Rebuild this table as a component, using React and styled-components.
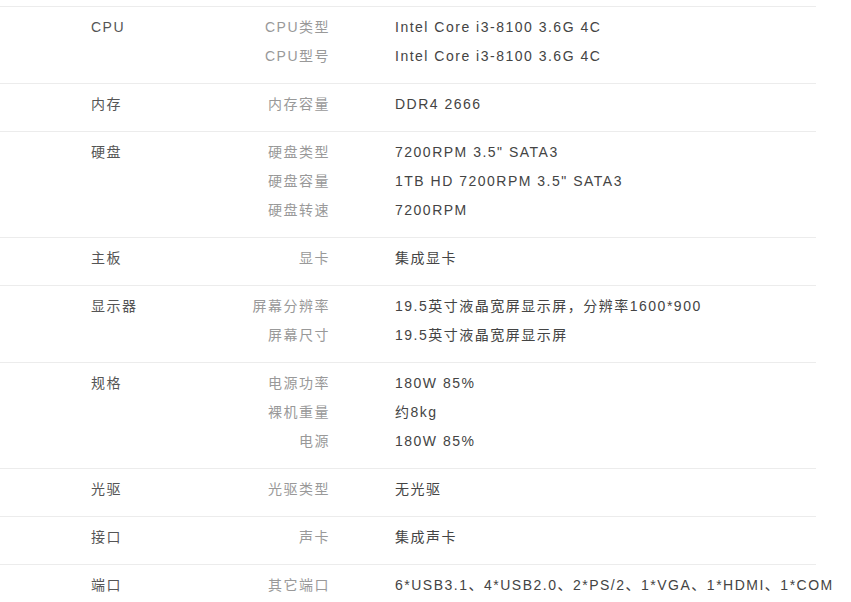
import React from 'react'
import styled, { createGlobalStyle } from 'styled-components'

const GlobalStyle = createGlobalStyle`
  body {
    margin: 0;
    background: #fff;
    font-family: "Liberation Sans", Arial, "Noto Sans CJK SC", sans-serif;
  }
`

const specs = [
  { name: 'CPU', items: [['CPU类型', 'Intel Core i3-8100 3.6G 4C'], ['CPU型号', 'Intel Core i3-8100 3.6G 4C']] },
  { name: '内存', items: [['内存容量', 'DDR4 2666']] },
  {
    name: '硬盘',
    items: [
      ['硬盘类型', '7200RPM 3.5" SATA3'],
      ['硬盘容量', '1TB HD 7200RPM 3.5" SATA3'],
      ['硬盘转速', '7200RPM'],
    ],
  },
  { name: '主板', items: [['显卡', '集成显卡']] },
  {
    name: '显示器',
    items: [
      ['屏幕分辨率', '19.5英寸液晶宽屏显示屏，分辨率1600*900'],
      ['屏幕尺寸', '19.5英寸液晶宽屏显示屏'],
    ],
  },
  {
    name: '规格',
    items: [
      ['电源功率', '180W 85%'],
      ['裸机重量', '约8kg'],
      ['电源', '180W 85%'],
    ],
  },
  { name: '光驱', items: [['光驱类型', '无光驱']] },
  { name: '接口', items: [['声卡', '集成声卡']] },
  { name: '端口', items: [['其它端口', '6*USB3.1、4*USB2.0、2*PS/2、1*VGA、1*HDMI、1*COM']] },
]

const App = () => {
  return (
    <>
      <GlobalStyle />
      <SpecTable>
        {specs.map(group => (
          <Group key={group.name}>
            <GroupName>{group.name}</GroupName>
            <Items>
              {group.items.map(([label, value]) => (
                <Item key={label}>
                  <Label>{label}</Label>
                  <Value>{value}</Value>
                </Item>
              ))}
            </Items>
          </Group>
        ))}
      </SpecTable>
    </>
  )
}

const SpecTable = styled.div`
  width: 816px;
  padding-top: 6px;
  font-size: 14px;
  letter-spacing: 1.5px;
`

const Group = styled.div`
  display: flex;
  align-items: flex-start;
  border-top: 1px solid #ececec;
  padding: 10px 0 8px;
`

const GroupName = styled.div`
  flex: 0 0 100px;
  padding-left: 91px;
  color: #555;
  line-height: 20px;
`

const Items = styled.div`
  flex: 1;
  display: flex;
  flex-direction: column;
`

const Item = styled.div`
  display: grid;
  grid-template-columns: 139px 1fr;
  column-gap: 65px;
  line-height: 20px;
  margin-bottom: 9px;
  white-space: nowrap;
`

const Label = styled.div`
  color: #999;
  text-align: right;
`

const Value = styled.div`
  color: #444;
`

export default App
